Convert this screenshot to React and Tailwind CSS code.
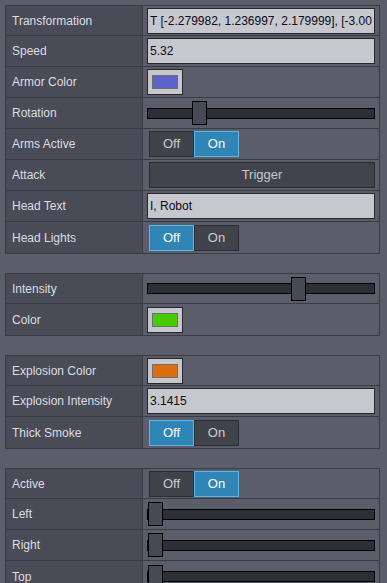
const groups = [
  [
    { label: "Transformation", type: "text", value: "T [-2.279982, 1.236997, 2.179999], [-3.000000, 0.000000, 0.000000]" },
    { label: "Speed", type: "text", value: "5.32" },
    { label: "Armor Color", type: "color", value: "#5b63c9" },
    { label: "Rotation", type: "slider", value: 0.21 },
    { label: "Arms Active", type: "toggle", value: true },
    { label: "Attack", type: "button", value: "Trigger" },
    { label: "Head Text", type: "text", value: "I, Robot" },
    { label: "Head Lights", type: "toggle", value: false },
  ],
  [
    { label: "Intensity", type: "slider", value: 0.68 },
    { label: "Color", type: "color", value: "#44cc00" },
  ],
  [
    { label: "Explosion Color", type: "color", value: "#de6d0e" },
    { label: "Explosion Intensity", type: "text", value: "3.1415" },
    { label: "Thick Smoke", type: "toggle", value: false },
  ],
  [
    { label: "Active", type: "toggle", value: true },
    { label: "Left", type: "slider", value: 0 },
    { label: "Right", type: "slider", value: 0 },
    { label: "Top", type: "slider", value: 0 },
  ],
];

function TextField({ value }) {
  return (
    <input
      readOnly
      value={value}
      className="h-[26px] w-full bg-[#c7c8cd] border border-[#26272c] px-[2px] text-[12px] text-[#0a0a1a] outline-none"
    />
  );
}

function ColorField({ value }) {
  return (
    <div className="h-[26px] w-[36px] bg-[#c7c8cd] border border-[#26272c] flex items-center justify-center">
      <div
        className="h-[14px] w-[26px] border border-[#6d6d70]"
        style={{ backgroundColor: value }}
      />
    </div>
  );
}

function SliderField({ value }) {
  return (
    <div className="relative h-[24px] w-full flex items-center">
      <div className="h-[11px] w-full bg-[#2d2f36] border border-black" />
      <div
        className="absolute top-0 h-[24px] w-[15px] bg-[#474955] border border-black"
        style={{ left: Math.round(1 + value * 211) }}
      />
    </div>
  );
}

function ToggleField({ value }) {
  const on = "bg-[#2f86b6] border-[#5cb8e8] text-white";
  const off = "bg-[#40424c] border-[#2a2c32] text-[#c9ccd3]";
  return (
    <div className="flex ml-[2px]">
      <div className={`h-[26px] w-[45px] border flex items-center justify-center text-[13px] ${value ? off : on}`}>
        Off
      </div>
      <div className={`h-[26px] w-[45px] border flex items-center justify-center text-[13px] ${value ? on : off}`}>
        On
      </div>
    </div>
  );
}

function ButtonField({ value }) {
  return (
    <div className="h-[26px] w-full ml-[2px] bg-[#41434d] border border-[#2a2c32] flex items-center justify-center text-[13px] text-[#c3c8d2]">
      {value}
    </div>
  );
}

function Field({ row }) {
  if (row.type === "text") return <TextField value={row.value} />;
  if (row.type === "color") return <ColorField value={row.value} />;
  if (row.type === "slider") return <SliderField value={row.value} />;
  if (row.type === "toggle") return <ToggleField value={row.value} />;
  return <ButtonField value={row.value} />;
}

export default function App() {
  return (
    <div
      className="min-h-[583px] bg-[#5b5d6b] pt-[5px] pl-[5px] overflow-hidden"
      style={{ fontFamily: '"Liberation Sans", Arial, sans-serif' }}
    >
      <div className="w-[375px] flex flex-col gap-[19px]">
        {groups.map((rows, gi) => (
          <div key={gi} className="border border-[#3a3c45] divide-y divide-[#3a3c45]">
            {rows.map((row) => (
              <div key={row.label} className="flex h-[31px] first:h-[30px]">
                <div className="w-[137px] shrink-0 bg-[#494b56] border-r border-[#3a3c45] flex items-center pl-[6px] text-[12px] text-[#dcdee4]">
                  {row.label}
                </div>
                <div className="flex-1 min-w-0 flex items-center px-[4px]">
                  <Field row={row} />
                </div>
              </div>
            ))}
          </div>
        ))}
      </div>
    </div>
  );
}
